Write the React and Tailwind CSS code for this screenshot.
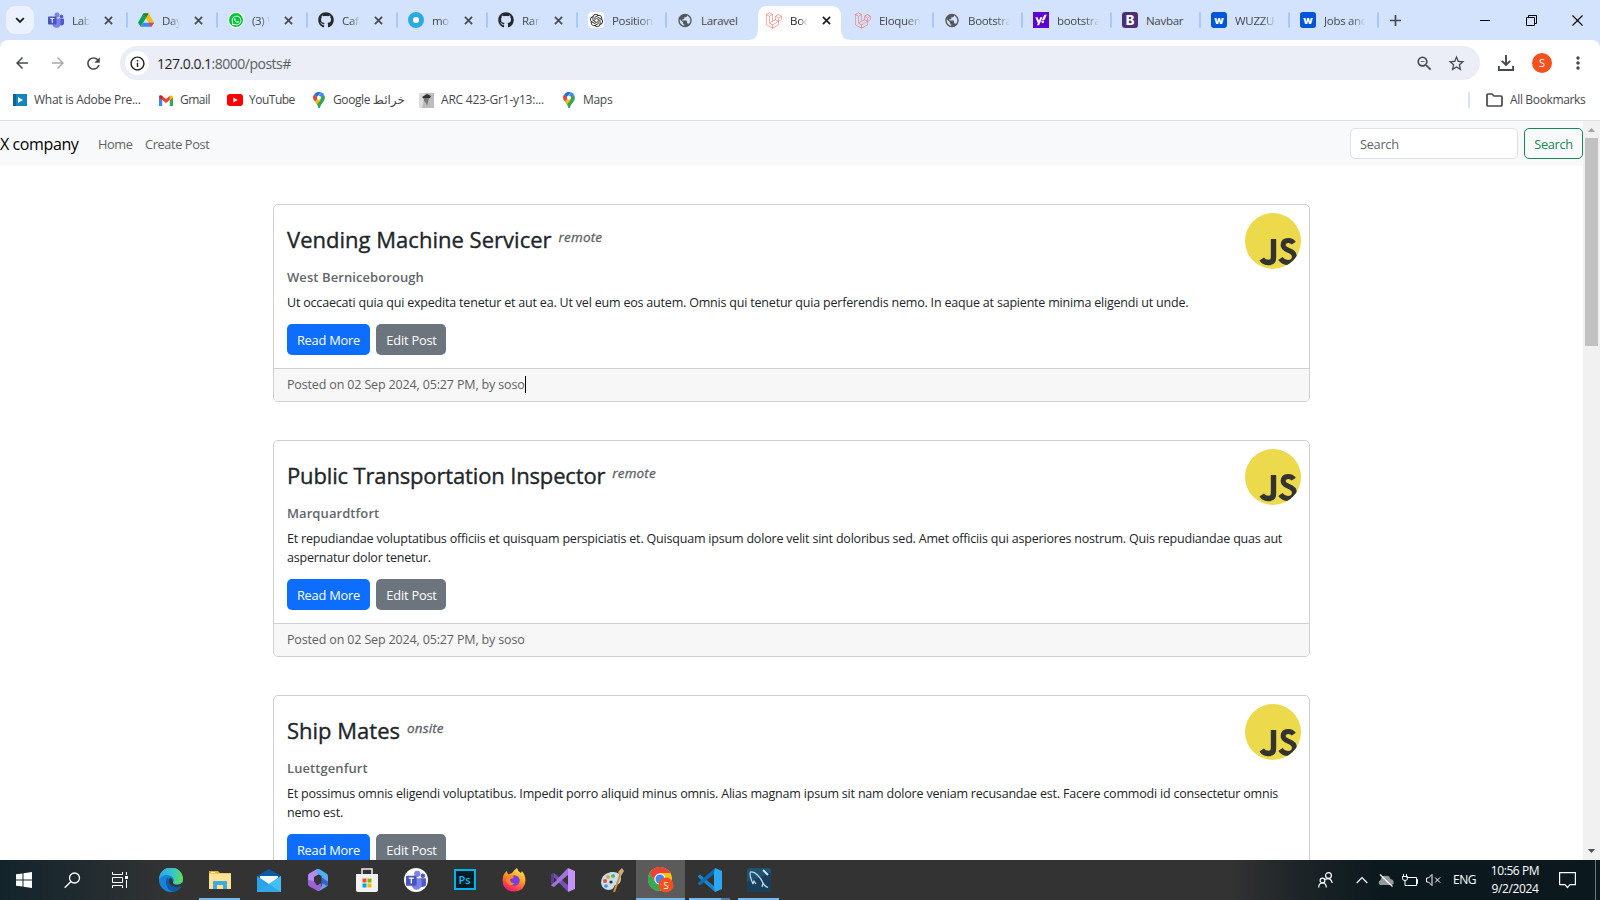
import React from "react";
import { FaGithub, FaWhatsapp, FaLaravel, FaYahoo } from "react-icons/fa";
import { SiOpenai } from "react-icons/si";
import {
  MdArrowBack, MdArrowForward, MdRefresh, MdInfoOutline, MdZoomOut,
  MdStarBorder, MdMoreVert, MdPublic, MdAdd,
} from "react-icons/md";

const Teams = ({ size = 16 }) => (
  <svg width={size} height={size} viewBox="0 0 32 32">
    <circle cx="27" cy="9" r="3.6" fill="#5059c9" />
    <path d="M22 13h8.500q1.500 0 1.500 1.500v7a5 5 0 0 1-10 1z" fill="#5059c9" />
    <circle cx="18" cy="6" r="5" fill="#7b83eb" />
    <path d="M9 13h14q2 0 2 2v8a8 8 0 0 1-16 1z" fill="#7b83eb" />
    <rect x="0" y="9" width="17" height="16" rx="1.500" fill="#4b53bc" />
    <path d="M4.500 13h8M8.500 13v8.500" stroke="#fff" strokeWidth="2.200" />
  </svg>
);

const Drive = () => (
  <svg width="16" height="16" viewBox="0 0 24 22">
    <path d="M8 1h8l8 14h-8z" fill="#fbbc04" />
    <path d="M8 1 0 15l4 6 8-13z" fill="#0f9d58" />
    <path d="M4 21 8 15h16l-4 6z" fill="#4285f4" />
    <path d="M16 15h8l-4 6z" fill="#ea4335" />
    <path d="M12 8 8 1h8z" fill="#188038" />
  </svg>
);

const WhatsApp = () => (
  <span className="flex size-[14px] items-center justify-center rounded-full bg-[#00c536] ring-1 ring-white text-white">
    <FaWhatsapp size={11} />
  </span>
);

const OpenAi = () => (
  <span className="flex size-4 items-center justify-center rounded-sm bg-white text-[#222]">
    <SiOpenai size={13} />
  </span>
);

const Yahoo = () => (
  <span className="flex size-4 items-center justify-center bg-[#5f01d1] text-white"><FaYahoo size={12} /></span>
);

const Badge = ({ letter, tone }) => (
  <span className={`flex size-4 items-center justify-center rounded-[3px] font-['Inter',sans-serif] font-extrabold leading-none text-white ${tone}`}>{letter}</span>
);

const Ring = () => <span className="size-4 rounded-full border-[5px] border-[#29abe2] bg-white" />;
const Laravel = () => <FaLaravel size={17} className="text-[#f9635b]" />;
const Globe = () => <MdPublic size={17} className="text-[#54585d]" />;
const Git = () => <FaGithub size={16} className="text-[#24292f]" />;

const tabs = [
  { icon: <Teams />, label: "Lab", close: true },
  { icon: <Drive />, label: "Day", close: true },
  { icon: <WhatsApp />, label: "(3) W", close: true },
  { icon: <Git />, label: "Cafe", close: true },
  { icon: <Ring />, label: "mos", close: true },
  { icon: <Git />, label: "Ran", close: true },
  { icon: <OpenAi />, label: "Position" },
  { icon: <Globe />, label: "Laravel" },
  { icon: <Laravel />, label: "Boo", close: true, active: true },
  { icon: <Laravel />, label: "Eloquen" },
  { icon: <Globe />, label: "Bootstra" },
  { icon: <Yahoo />, label: "bootstra" },
  { icon: <Badge letter="B" tone="bg-[#4c2f7a] text-[13px]" />, label: "Navbar" },
  { icon: <Badge letter="w" tone="bg-[#0055d9] text-[11px]" />, label: "WUZZU" },
  { icon: <Badge letter="w" tone="bg-[#0055d9] text-[11px]" />, label: "Jobs and" },
];

const fadeFor = (label, close) => {
  if (label === "Laravel" || label === "Navbar") return "w-[42px]";
  return close
    ? "w-[18px] [mask-image:linear-gradient(to_right,#000_50%,transparent)]"
    : "w-[42px] [mask-image:linear-gradient(to_right,#000_65%,transparent)]";
};

function Tab({ icon, label, close, active, wide, divider }) {
  return (
    <div className={`relative flex h-full shrink-0 items-center pl-[10px] ${wide ? "w-[90px]" : "w-[89px]"}`}>
      {active && (
        <svg className="absolute left-[-8px] top-[6px]" width="105" height="34">
          <path d="M0 34q10 0 10-10V10Q10 0 20 0h63q10 0 10 10v14q0 10 10 10z" fill="#fff" />
        </svg>
      )}
      <span className="relative flex size-4 shrink-0 items-center justify-center">{icon}</span>
      <span className={`relative ml-2 overflow-hidden whitespace-nowrap pt-[2px] text-[11.5px] tracking-[-0.3px] ${fadeFor(label, close)} ${active ? "text-[#1f1f1f]" : "text-[#45484c]"}`}>{label}</span>
      {close && (
        <svg width="9" height="9" className={`relative ml-[14px] shrink-0 ${active ? "text-[#1f1f1f]" : "text-[#45484c]"}`}>
          <path d="m.9.9 7.200 7.200m0-7.200L.9 8.100" stroke="currentColor" strokeWidth="1.700" />
        </svg>
      )}
      {divider && <span className="absolute right-0 top-3 h-4 w-[2px] rounded-full bg-[#a8c7fa]" />}
    </div>
  );
}

function TabStrip() {
  return (
    <div className="flex h-10 shrink-0 items-center bg-[#d3e2fd]">
      <button className="ml-[6px] mr-1 flex size-7 shrink-0 items-center justify-center rounded-[9px] bg-[#ebf2fe]">
        <svg width="10" height="7" viewBox="0 0 10 7"><path d="m1.200 1.200 3.800 3.800 3.800-3.800" fill="none" stroke="#1f1f1f" strokeWidth="1.900" /></svg>
      </button>
      {tabs.map((t, i) => (
        <Tab key={i} {...t} wide={i < 6} divider={i !== 7 && i !== 8} />
      ))}
      <svg width="11" height="11" className="ml-[11px]"><path d="M5.500 0v11M0 5.500h11" stroke="#45484c" strokeWidth="1.700" /></svg>
      <div className="ml-auto flex">
        <span className="flex w-[46px] items-center justify-center"><span className="h-px w-[10px] bg-black" /></span>
        <span className="flex w-[46px] items-center justify-center">
          <svg width="11" height="11"><path d="M.5 2.500h8v8h-8zM2.500 2.500v-2h8v8h-2" fill="none" stroke="#000" /></svg>
        </span>
        <span className="flex w-[46px] items-center justify-center">
          <svg width="11" height="11"><path d="m.5.5 10 10m0-10-10 10" fill="none" stroke="#000" strokeWidth="1.100" /></svg>
        </span>
      </div>
    </div>
  );
}

function Toolbar() {
  return (
    <div className="h-10 shrink-0 bg-[#d3e2fd]">
      <div className="flex h-full items-center rounded-t-lg bg-white pt-[6px] text-[#45484c]">
        <MdArrowBack size={18} className="ml-[13px]" />
        <MdArrowForward size={18} className="ml-[18px] text-[#a9abae]" />
        <MdRefresh size={19} className="ml-[17px]" />
        <div className="ml-[17px] flex h-[34px] w-[1360px] items-center rounded-full bg-[#ebeef7]">
          <span className="ml-[5px] flex size-6 items-center justify-center rounded-full bg-white text-[#1f1f1f]"><MdInfoOutline size={17} /></span>
          <span className="ml-[8px] text-[14px] tracking-[-0.5px] text-[#1f1f1f]">127.0.0.1<span className="text-[#5a5d62]">:8000/posts#</span></span>
          <MdZoomOut size={19} className="ml-auto mr-[13px]" />
          <MdStarBorder size={19} className="mr-[14px]" />
        </div>
        <svg className="ml-[18px]" width="16" height="16" viewBox="0 0 16 16" fill="none" stroke="#45484c" strokeWidth="1.900">
          <path d="M8 0v9.500M3.800 5.800 8 10l4.200-4.200M.9 11v4h14.200v-4" />
        </svg>
        <span className="ml-[18px] flex size-5 items-center justify-center rounded-full bg-[#f4511e] text-[11px] text-white">S</span>
        <MdMoreVert size={20} className="ml-[16px]" />
      </div>
    </div>
  );
}

const Pin = () => (
  <svg width="12" height="16" viewBox="0 0 12 16">
    <path d="M1.300 2.300 6 6 2 9.500Q0 7.500 0 5.600q0-2 1.300-3.300z" fill="#ea4335" />
    <path d="M1.300 2.300A6 6 0 0 1 8 .3L4 5z" fill="#1a73e8" />
    <path d="M8 .3Q10 1 11.200 3L5 10 2 9.500z" fill="#4285f4" />
    <path d="m11.200 3q1.800 3.700-1 7Q7.500 13 6.800 16h-1.400Q5 13 2 9.500z" fill="#34a853" />
    <path d="m2 9.500 3-3.500 2.500 2-3.200 4.200Q3 10.600 2 9.500z" fill="#fbbc04" />
    <circle cx="6" cy="5.800" r="2.100" fill="#fff" />
  </svg>
);

function Bookmarks() {
  return (
    <div className="flex h-[41px] shrink-0 items-center whitespace-nowrap border-b border-[#dfe1e0] bg-white text-[12px] text-[#45484c]">
      <svg className="ml-[13px]" width="14" height="12"><path d="M0 0h14v12H0z" fill="#1485bd" /><path d="M0 0h3v12H0z" fill="#0b649b" /><path d="m5 3 5 3-5 3z" fill="#fff" /></svg>
      <span className="ml-[7px] w-[107px] tracking-[-0.27px]">What is Adobe Pre...</span>
      <svg className="ml-[18px]" width="14" height="11" viewBox="0 0 14 11">
        <path d="M0 1.500V11h3.200V5z" fill="#4285f4" /><path d="M14 1.500V11h-3.200V5z" fill="#34a853" />
        <path d="M0 1.500Q.6-.5 2.600.5L7 4l4.400-3.500L10.800 5 7 8 3.200 5z" fill="#ea4335" />
        <path d="M10.800 1v4L14 2.600Q14-.8 10.800 1z" fill="#fbbc04" /><path d="M3.200 1v4L0 2.600Q0-.8 3.200 1z" fill="#c5221f" />
      </svg>
      <span className="ml-[7px] w-[30px] tracking-[-0.5px]">Gmail</span>
      <svg className="ml-[17px]" width="16" height="12"><rect width="16" height="12" rx="3" fill="#f00" /><path d="m6.300 3.500 4.400 2.500-4.400 2.500z" fill="#fff" /></svg>
      <span className="ml-[6px] w-[46px] tracking-[-0.5px]">YouTube</span>
      <span className="ml-[18px]"><Pin /></span>
      <span className="ml-[8px] w-[70px] tracking-[-0.4px]">Google خرائط</span>
      <svg className="ml-[16px]" width="15" height="15"><path d="M0 0h15v15H0z" fill="#bdbdbd" /><path d="M0 0h6l-3 15H0z" fill="#ddd" /><path d="m3 4 5-3 4 2-1 2-6 1z" fill="#333" /><path d="M5 5h5l-1 4-1 4-1-3-2-2z" fill="#777" /></svg>
      <span className="ml-[7px] w-[104px] tracking-[-0.2px]">ARC 423-Gr1-y13:...</span>
      <span className="ml-[18px]"><Pin /></span>
      <span className="ml-[8px] tracking-[-0.3px]">Maps</span>
      <span className="ml-auto h-4 w-[2px] bg-[#d3e2fd]" />
      <svg className="ml-[16px]" width="17" height="14" viewBox="0 0 17 14"><path d="M1 2q0-1 1-1h4l2 2h7q1 0 1 1v8q0 1-1 1H2q-1 0-1-1z" fill="none" stroke="#45484c" strokeWidth="1.700" /></svg>
      <span className="ml-[7px] mr-[14px] w-[76px] tracking-[-0.35px]">All Bookmarks</span>
    </div>
  );
}

const posts = [
  {
    title: "Vending Machine Servicer", type: "remote", place: "West Berniceborough", caret: true,
    spacing: "tracking-[0.02px]",
    lines: ["Ut occaecati quia qui expedita tenetur et aut ea. Ut vel eum eos autem. Omnis qui tenetur quia perferendis nemo. In eaque at sapiente minima eligendi ut unde."],
  },
  {
    title: "Public Transportation Inspector", type: "remote", place: "Marquardtfort",
    spacing: "tracking-[-0.15px]",
    lines: ["Et repudiandae voluptatibus officiis et quisquam perspiciatis et. Quisquam ipsum dolore velit sint doloribus sed. Amet officiis qui asperiores nostrum. Quis repudiandae quas aut", "aspernatur dolor tenetur."],
  },
  {
    title: "Ship Mates", type: "onsite", place: "Luettgenfurt",
    spacing: "tracking-[0px]",
    lines: ["Et possimus omnis eligendi voluptatibus. Impedit porro aliquid minus omnis. Alias magnam ipsum sit nam dolore veniam recusandae est. Facere commodi id consectetur omnis", "nemo est."],
  },
];

function Post({ title, type, place, lines, caret, spacing }) {
  return (
    <article className="relative mb-[38px] w-[1037px] shrink-0 overflow-hidden whitespace-nowrap rounded-[5px] border border-[#cfd0d1] bg-white">
      <svg className="absolute right-[8px] top-[8px]" width="56" height="56" viewBox="0 0 56 56">
        <defs><clipPath id="disc"><circle cx="28" cy="28" r="28" /></clipPath></defs>
        <g clipPath="url(#disc)">
          <path d="M0 0h56v56H0z" fill="#edd94c" />
          <path d="M28.500 26v18.500q0 5-5 5-4.500 0-6.800-3.500" fill="none" stroke="#333330" strokeWidth="5.400" />
          <path d="M48.800 30.200q-2-2.900-5.700-2.700-4.800.2-5 4.500 0 3.300 5 5.200 6.500 2.300 6.300 6.800-.3 5.300-6.500 5.400-4.800 0-7.500-3.900" fill="none" stroke="#333330" strokeWidth="5" />
        </g>
      </svg>
      <div className="px-[13px] pb-[13px] pt-[20px]">
        <div className="flex h-[30px] items-center">
          <h3 className={`mt-[-2px] text-[22px] leading-[30px] text-[#212529] [-webkit-text-stroke:0.35px_#212529] ${spacing}`}>{title}</h3>
          <em className="ml-[7px] mt-[-5px] text-[13.5px] tracking-[0.15px] text-[#5d6166] [-webkit-text-stroke:0.3px_#5d6166]">{type}</em>
        </div>
        <h6 className="mt-[13px] h-[19px] text-[13px] font-semibold leading-[19px] tracking-[0.08px] text-[#62666a]">{place}</h6>
        <p className="mt-[6px] text-[12.5px] leading-[19px] tracking-[-0.195px] text-[#212529]">
          {lines.map((l) => <span key={l} className="block">{l}</span>)}
        </p>
        <div className="mt-[12px] flex gap-[6px] text-[12.8px] tracking-[-0.2px] text-white">
          <button className="h-[31px] w-[83px] rounded-[5px] bg-[#0d6efd] pt-[2px]">Read More</button>
          <button className="h-[31px] w-[70px] rounded-[5px] bg-[#6c757d] pt-[2px] pl-px">Edit Post</button>
        </div>
      </div>
      <footer className="flex h-[33px] items-center border-t border-[#cfd0d1] bg-[#f7f7f7] px-[13px] pt-px text-[12.5px] tracking-[-0.15px] text-[#5d6166]">
        Posted on 02 Sep 2024, 05:27 PM, by soso
        {caret && <span className="mt-[-2px] h-[17px] w-px bg-black" />}
      </footer>
    </article>
  );
}

function Page() {
  return (
    <div className="flex min-h-0 flex-1 overflow-hidden bg-white">
      <main className="flex w-[1583px] flex-col overflow-hidden">
        <nav className="flex h-[45px] shrink-0 items-center bg-[#f8f9fa] text-[12.8px] text-[#5f6366]">
          <span className="w-[79px] whitespace-nowrap text-[16px] tracking-[-0.4px] text-black">X company</span>
          <a className="ml-[19px] w-[35px] pt-[2px] tracking-[-0.4px]">Home</a>
          <a className="ml-[12px] pt-[2px] tracking-[-0.4px]">Create Post</a>
          <span className="ml-auto flex h-[31px] w-[168px] items-center rounded-[5px] border border-[#dee2e6] bg-white px-[9px] pt-[2px] text-[12.8px] tracking-[-0.3px]">Search</span>
          <button className="ml-[6px] h-[31px] w-[59px] rounded-[5px] border border-[#198754] pt-[2px] text-[12.8px] tracking-[-0.35px] text-[#198754]">Search</button>
        </nav>
        <div className="flex min-h-0 flex-1 flex-col overflow-hidden pl-[273px] pt-[38px]">
          {posts.map((p) => <Post key={p.title} {...p} />)}
        </div>
      </main>
      <aside className="flex w-[17px] flex-col items-center bg-[#f1f1f1]">
        <svg width="17" height="17"><path d="m5 11 3.500-4L12 11z" fill="#a3a3a3" /></svg>
        <span className="h-[208px] w-[13px] bg-[#c1c1c1]" />
        <svg className="mt-auto" width="17" height="17"><path d="m5 6 3.500 4L12 6z" fill="#505050" /></svg>
      </aside>
    </div>
  );
}

const Edge = () => (
  <svg width="24" height="24" viewBox="0 0 24 24">
    <defs>
      <linearGradient id="eg" x1="0" x2="1" y1=".3" y2=".4"><stop stopColor="#2aa5e8" /><stop offset=".55" stopColor="#35c6cf" /><stop offset="1" stopColor="#62dc55" /></linearGradient>
      <linearGradient id="eb" x1="0" x2="1"><stop stopColor="#127fd6" /><stop offset="1" stopColor="#0c4f9c" /></linearGradient>
    </defs>
    <circle cx="12" cy="12" r="12" fill="#1583da" />
    <path d="M0 11.500A12 12 0 0 1 24 11q0 5.500-5.700 5.700-3.800 0-4.300-2 1.800-2.200 0-5Q11.500 6.500 7 7 2.500 7.700 0 11.500z" fill="url(#eg)" />
    <path d="M8.500 9.500Q5.300 13 7.300 17.700 10 23.500 15.500 23.300 20 22 22.500 18q-4.500 2.200-9 .2-4-2-4-5.200 0-2 1.500-3.500-1.500-.5-2.500 0z" fill="url(#eb)" />
    <path d="M14 14.700q.5 2 4.300 2 3.500 0 5.200-2.400.5 2-1 3.700-4.500 2.200-9 .2-4-2-4-5.200 0-1.500 1.700-3.200 3 1 2.800 4.900z" fill="#333" />
    <path d="M9.600 12.500q.2 4 4 5.700 4.500 2 8.900-.2Q20 22 15.500 23.300q-4.800.2-7.600-4.600-2.400-5 .8-9z" fill="#0d58a9" />
  </svg>
);
const Explorer = () => (
  <svg width="22" height="19" viewBox="0 0 22 19">
    <path d="M0 0h9l2 2h11v16H0z" fill="#e8ab2a" /><path d="M0 2.500h22V18H0z" fill="#ffe394" /><path d="M2 1h4v1H2z" fill="#fff3c0" />
    <path d="M4 18v-7q0-1 1-1h12q1 0 1 1v7h-4v-4H8v4z" fill="#3fa9e0" />
  </svg>
);
const Mail = () => (
  <svg width="24" height="23" viewBox="0 0 24 23"><path d="m0 7 12-7 12 7v5H0z" fill="#0c59a4" /><path d="M3 7h18v9H3z" fill="#f3f6f9" /><path d="m0 7 12 8 12-8v16H0z" fill="#2aa4e8" /><path d="m0 23 24-16v16z" fill="#42c0f5" /><path d="m0 23 12-8 12 8z" fill="#1f91dd" opacity=".5" /></svg>
);
const Office = () => (
  <svg width="22" height="22" viewBox="0 0 22 22">
    <path d="M10 0 2.500 4.200Q1 5 1 7v8l6-3V8l7-4z" fill="#b48bf2" />
    <path d="M10 0q1.500-.4 3 .5l6 3.700q2 1.200 2 3V13l-6.500-4.500V7L9.500 4z" fill="#4fb0f0" />
    <path d="M21 8v7q0 2-1.500 2.800L13 21.500q-2 .8-3.500-.2L15 17v-6z" fill="#6aa3ec" />
    <path d="m14.500 8.500 6.500 4v3q0 1.500-2 1L14.500 14z" fill="#3a60d0" />
    <path d="M1 15v-4l6 1 7.500 2.500-1.500 7q-2 .8-3.500-.2L2.500 17.600Q1 16.600 1 15z" fill="#9b62d6" />
    <path d="M7 12v-4l7-1v7l-4 2.500z" fill="#333" />
  </svg>
);
const Store = () => (
  <svg width="24" height="24" viewBox="0 0 24 24"><path d="M7 6V1h10v5" fill="none" stroke="#eee" strokeWidth="1.500" /><path d="M1 6h22v16q0 2-2 2H3q-2 0-2-2z" fill="#f2f2f2" /><path d="M7.500 10.500h4v4h-4z" fill="#f25022" /><path d="M12.500 10.500h4v4h-4z" fill="#7fba00" /><path d="M7.500 15.500h4v4h-4z" fill="#00a4ef" /><path d="M12.500 15.500h4v4h-4z" fill="#ffb900" /></svg>
);
const Firefox = () => (
  <svg width="24" height="24" viewBox="0 0 24 24">
    <defs><linearGradient id="ff" x1=".8" x2=".3" y1="0" y2="1"><stop stopColor="#fff04a" /><stop offset=".45" stopColor="#ff9a2b" /><stop offset=".8" stopColor="#ff3d4d" /><stop offset="1" stopColor="#e5177f" /></linearGradient></defs>
    <path d="M5 3q0 2 1.500 3.500L10 5q2-3 5-5 .5 3 4 5 1-1 .8-2Q23.500 7 23.500 12.500 23 23 12 23.500 1 23 .6 13 .5 7.500 3 5q.7-1.500 2-2z" fill="url(#ff)" />
    <circle cx="12.500" cy="12.500" r="5.200" fill="#7a3ee0" /><path d="M6 8q4-2 6 1-1 2-4 2 0 4 4.500 4.500-4 3.500-7.500-.5Q3 11 6 8z" fill="#ff8a24" />
  </svg>
);
const Ribbon = ({ a, b, c }) => (
  <svg width="24" height="24" viewBox="0 0 24 24"><path d="m0 8 2-1.500L17 19v5L0 9z" fill={a} /><path d="m0 16 2 1.500L17 5V0L0 15z" fill={b} /><path d="m17 0 7 3v18l-7 3-1-5V5z" fill={c} /></svg>
);
const VisualStudio = () => (
  <svg width="24" height="24" viewBox="0 0 24 24"><path d="M0 6.500 3 5l15 13-1 6z" fill="#7c4db8" /><path d="M0 6.500v11L3 19V5z" fill="#5f3a94" /><path d="M3 19 18 6l-1-6L0 17.500z" fill="#a074dc" /><path d="m3 9.500 3 2.500-3 2.500z" fill="#333" /><path d="m17 0 7 3v18l-7 3z" fill="#c594f5" /><path d="m17 8-5 4 5 4z" fill="#333" /></svg>
);
const Paint = () => (
  <svg width="24" height="24" viewBox="0 0 24 24">
    <path d="M1 15Q1 6 11 4q9-1 10 6 0 6-5 7-2 0-2 2-1 3-6 3-6-1-7-7z" fill="#c5dfef" />
    <circle cx="5" cy="13" r="2" fill="#e84c3d" /><circle cx="8" cy="9" r="2" fill="#e8a13a" /><circle cx="13" cy="8" r="2" fill="#62b64c" /><circle cx="6" cy="18" r="1.800" fill="#4a8fd8" /><circle cx="11" cy="14" r="1.600" fill="#333" />
    <path d="m21 5-7 19" stroke="#dd8b2c" strokeWidth="2" /><path d="m18 4 4-4 2 3-3 5z" fill="#d5a878" />
  </svg>
);
const Chrome = () => (
  <svg width="26" height="26" viewBox="0 0 26 26">
    <circle cx="12" cy="12" r="12" fill="#fbc116" /><path d="M1.600 6A12 12 0 0 1 22.400 6H12L7 15z" fill="#ea4335" /><path d="M1.600 6A12 12 0 0 0 12 24l5-9H7z" fill="#34a853" />
    <circle cx="12" cy="12" r="5.700" fill="#fff" /><circle cx="12" cy="12" r="4.500" fill="#4285f4" /><circle cx="18" cy="18" r="7.500" fill="#f4511e" />
    <text x="18" y="21.500" textAnchor="middle" fontSize="9.500" fontFamily="Open Sans" fill="#fff">S</text>
  </svg>
);
const Workbench = () => (
  <svg width="24" height="24" viewBox="0 0 24 24"><rect width="24" height="24" rx="3" fill="#205274" /><path d="M0 14 24 5v16q0 3-3 3H3q-3 0-3-3z" fill="#183f5c" /><path d="M6 16Q2 7 3.500 4q3-1 7 3 4 4 5.500 8 1 3 5 4.500M6 16l1-3 2 3M16 15l-1 4" fill="none" stroke="#c9dbe8" strokeWidth="1.200" /><path d="m16 2 5 5" stroke="#e0e6ea" strokeWidth="1.800" /></svg>
);

const apps = [
  { el: <Edge /> },
  { el: <Explorer />, run: true },
  { el: <Mail /> },
  { el: <Office /> },
  { el: <Store /> },
  { el: <span className="flex size-6 items-center justify-center rounded-full bg-white"><Teams size={20} /></span> },
  { el: <span className="mb-[2px] flex h-[21px] w-[22px] items-center justify-center border-2 border-[#00b4e6] bg-[#001d27] text-[11px] font-semibold leading-none text-[#15bdf0]">Ps</span> },
  { el: <Firefox /> },
  { el: <VisualStudio /> },
  { el: <Paint /> },
  { el: <Chrome />, run: true, active: true },
  { el: <Ribbon a="#1787cf" b="#0d6eb5" c="#2ba8f2" />, run: true, split: true },
  { el: <Workbench />, run: true },
];

function Taskbar() {
  return (
    <div className="flex h-10 shrink-0 items-center bg-[linear-gradient(90deg,#12242b_0,#1e2a2f_70px,#333_170px,#333_1230px,#1d2427_1300px,#0b191f_1380px,#0b191f_100%)] text-[12px] text-white">
      <span className="flex w-12 justify-center"><svg width="16" height="16"><path d="M0 2.300 6.500 1.400v6.100H0zM7.500 1.200 16 0v7.500H7.500zM0 8.500h6.500v6.100L0 13.700zM7.500 8.500H16V16l-8.500-1.200z" fill="#fff" /></svg></span>
      <span className="flex w-12 justify-center"><svg width="17" height="17" fill="none" stroke="#fff" strokeWidth="1.300"><circle cx="10.500" cy="6" r="5" /><path d="M7 9.500.7 15.800" /></svg></span>
      <span className="flex w-[50px] pl-4"><svg width="16" height="16" fill="none" stroke="#fff"><path d="M.5 0v2.500h10V0M.5 16v-2.500h10V16M.5 5.500h10v5H.5zM14.500 0v3M14.500 8v8" /><path d="M13 4h3v3h-3z" fill="#fff" stroke="none" /></svg></span>
      {apps.map((a, i) => (
        <span key={i} className={`relative flex h-10 w-[49px] items-center justify-center ${a.active ? "bg-[#5b5b5b]" : ""}`}>
          {a.el}
          {a.run && <span className={`absolute bottom-0 h-[2px] bg-[#76b9ed] ${a.active ? "inset-x-0" : "inset-x-[4px]"} ${a.split ? "border-r-[9px] border-[#4f7fa5]" : ""}`} />}
        </span>
      ))}
      <div className="ml-auto flex h-full items-center">
        <svg className="mr-[23px]" width="15" height="16" fill="none" stroke="#fff" strokeWidth="1.200"><circle cx="10.500" cy="3.500" r="2.900" /><circle cx="4.500" cy="8.500" r="2.400" /><path d="M.7 15.500q0-4.500 3.800-4.500t3.800 4.500M7 7.500q6-2.500 7.200 3.500" /></svg>
        <svg width="12" height="8" className="mr-[10px]"><path d="m.7 7 5.300-5.500L11.300 7" fill="none" stroke="#fff" strokeWidth="1.200" /></svg>
        <svg width="16" height="13" className="mr-[8px]"><path d="M2 11Q-1 8 2.500 6 4 1 8 2q3-1 4.500 3 4 1 3 5l-2 1z" fill="#96999b" /><path d="m2 .5 12.500 12" stroke="#fff" strokeWidth="1.200" /></svg>
        <svg width="16" height="13" className="mr-[8px]" fill="none" stroke="#fff"><path d="M4.500 3.500h10v8H5.500M14.500 5.500h1v4h-1M1.500 0v2.500M4.500 0v2.500M.5 2.500h5v2q0 2-2.500 2T.5 4.500zM3 6.500v5h2.500" /></svg>
        <svg width="15" height="12" className="mr-[12px]" fill="none" stroke="#fff"><path d="M.5 4v4h2L6 11.500V.5L2.500 4zM9 3.500l5 5m0-5-5 5" /></svg>
        <span className="w-[23px] tracking-[-0.5px]">ENG</span>
        <div className="ml-[13px] w-[52px] whitespace-nowrap text-center leading-[18px] tracking-[-0.4px]"><div>10:56 PM</div><div>9/2/2024</div></div>
        <svg className="ml-[18px] mr-[19px]" width="17" height="17"><path d="M.6.6h15.800v12H11L8.500 15.500 6 12.600H.6z" fill="none" stroke="#fff" strokeWidth="1.200" /></svg>
        <span className="mr-1 h-full w-px bg-[#6b7479]" />
      </div>
    </div>
  );
}

export default function App() {
  return (
    <div className="flex h-[900px] w-[1600px] flex-col overflow-hidden bg-white font-['Open_Sans','DejaVu_Sans',sans-serif]">
      <TabStrip />
      <Toolbar />
      <Bookmarks />
      <Page />
      <Taskbar />
    </div>
  );
}
